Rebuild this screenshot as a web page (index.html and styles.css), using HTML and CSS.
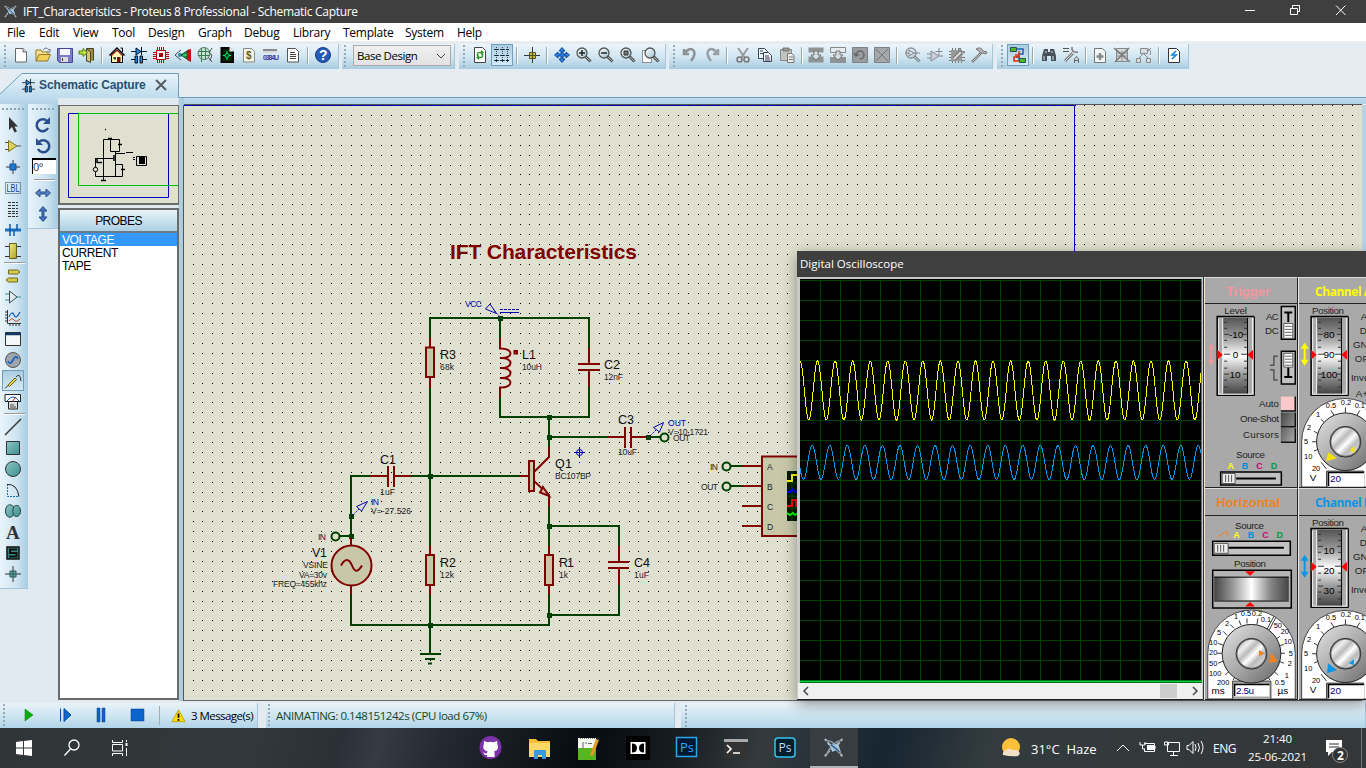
FILE: index.html
```html
<!DOCTYPE html>
<html lang="en">
<head>
<meta charset="utf-8">
<title>IFT_Characteristics - Proteus 8 Professional - Schematic Capture</title>
<link rel="stylesheet" href="styles.css">
</head>
<body>
<svg class="defs" width="0" height="0">
<defs>
<linearGradient id="steelV" x2="0" y2="1"><stop offset="0" stop-color="#555"/><stop offset=".25" stop-color="#999"/><stop offset=".5" stop-color="#fff"/><stop offset=".75" stop-color="#999"/><stop offset="1" stop-color="#444"/></linearGradient>
<linearGradient id="steelH"><stop offset="0" stop-color="#444"/><stop offset=".25" stop-color="#999"/><stop offset=".5" stop-color="#fff"/><stop offset=".75" stop-color="#888"/><stop offset="1" stop-color="#444"/></linearGradient>
<linearGradient id="ring" x2="1" y2="1"><stop offset="0" stop-color="#e4e4e4"/><stop offset=".5" stop-color="#aaa"/><stop offset="1" stop-color="#666"/></linearGradient>
<linearGradient id="key" x2="1" y2="1"><stop offset="0" stop-color="#444"/><stop offset=".5" stop-color="#777"/><stop offset="1" stop-color="#aaa"/></linearGradient>
<linearGradient id="cap" x1="0" y1="0" x2="1" y2="1"><stop offset="0" stop-color="#999"/><stop offset=".25" stop-color="#eee"/><stop offset=".4" stop-color="#bbb"/><stop offset=".55" stop-color="#fff"/><stop offset=".7" stop-color="#bbb"/><stop offset="1" stop-color="#eee"/></linearGradient>
<linearGradient id="teal" x2="1" y2="1"><stop offset="0" stop-color="#8cc6c6"/><stop offset="1" stop-color="#3e8f90"/></linearGradient>
<linearGradient id="gold" x2="1" y2="1"><stop offset="0" stop-color="#f2ef83"/><stop offset="1" stop-color="#aaa028"/></linearGradient>
<linearGradient id="lens" x2="1" y2="1"><stop offset="0" stop-color="#fff"/><stop offset="1" stop-color="#9dc3d6"/></linearGradient>
<g id="dialFrame"><path d="M1217 396V316.500H1254" fill="none" stroke="#000" stroke-width="1.500"/><path d="M1216.500 396H1254.500V316.500" fill="none" stroke="#000"/><path d="M1218.500 395V318.500M1252.500 318V394.500H1219" fill="none" stroke="#eee"/><rect x="1222.500" y="318" width="25" height="76" fill="url(#steelV)"/><path d="M1222.500 318V394" stroke="#f2f2f2"/><path d="M1247.500 318V394" stroke="#000"/><path class="ticks" d="M1224 322.500h3M1224 328.500h3M1224 334.500h5M1224 340.500h3M1224 347.500h3M1224 354.500h6M1224 361.500h3M1224 368.500h3M1224 374.500h5M1224 380.500h3M1224 387.500h3M1244 322.500h3M1244 328.500h3M1243 334.500h4M1244 340.500h3M1244 347.500h3M1241 354.500h6M1244 361.500h3M1244 368.500h3M1243 374.500h4M1244 380.500h3M1244 387.500h3"/><path d="M1217 350l5.500 5-5.500 5zM1253 350l-5.500 5 5.500 5z" fill="#f00"/></g>
<g id="vdial"><path d="M1301.500 488V442.500A43.500 43.500 0 0 1 1388.500 442.500V488H1364V472H1326.500V488z" fill="#fff" stroke="#444"/><path d="M1326.500 470L1321 463M1314 452l6-3M1312 442.500h6M1314 432l5 3M1321 420l4 4M1331 411l3 5M1345.500 408v6M1360 411l-3 5M1366 410l5-9" stroke="#333" fill="none"/><circle cx="1345.500" cy="442.500" r="29" fill="url(#ring)" stroke="#222"/><circle cx="1345.500" cy="442.500" r="15.500" fill="#777" stroke="#333"/><circle cx="1345.500" cy="442.500" r="14" fill="url(#cap)"/><g class="knobtext"><text x="1331" y="409">0.5</text><text x="1346" y="406">0.2</text><text x="1360" y="409">0.1</text><text x="1318" y="418">1</text><text x="1309" y="431">2</text><text x="1306" y="445">5</text><text x="1308" y="460">10</text><text x="1316" y="472">20</text></g><text class="unit" x="1313" y="482">V</text><rect x="1328.500" y="473.500" width="36" height="14" fill="#fff"/><path d="M1328.500 487V473.500H1364" stroke="#000" fill="none" stroke-width="1.500"/><text class="val" x="1330" y="482.500" textLength="11">20</text></g>
<g id="bird"><path d="M2 2l4 5M14 2l-4 5M2 14l4-5M14 14l-4-5" stroke="#aeb4b8" stroke-width="1.500" stroke-dasharray="2 1" fill="none"/><path d="M3 3q6 0 10 10M13 3q-6 1-10 10" stroke="#8ba0ad" fill="none"/><path d="M4 5l4 1 3-1 1 3 1 3-4-1-2 1-1-3z" fill="#a8c6da"/><path d="M6 6l4 3 2 2" stroke="#2a5d94" fill="none"/></g>
<g id="mag"><path d="M9.500 9.500l5 5" stroke="#555" stroke-width="3"/><path d="M10 10l4 4" stroke="#aaa"/><circle cx="6" cy="6" r="5" fill="url(#lens)" stroke="#555" stroke-width="1.300"/></g>
<g id="schem"><path d="M0 4.500h5M10 4.500h6" stroke="#123"/><path d="M5 1v7l5-3.500z" fill="#1e8ce0" stroke="#012"/><path d="M10.500 0v8M0 12.500h4M12 12.500h4" stroke="#012"/><path d="M4 9h2.500v7H4zM9 9h2.500v7H9z" fill="#1e8ce0" stroke="#012"/></g>
</defs>
</svg>

<header class="titlebar">
<svg class="app" viewBox="0 0 16 16"><use href="#bird"/></svg>
<span class="caption">IFT_Characteristics - Proteus 8 Professional - Schematic Capture</span>
<svg class="winbtns" viewBox="1240 0 126 23"><path d="M1245 10.500h10M1290.500 8.500h7v6h-7zM1292.500 8v-2.500h7v6h-2M1336 5.500l9.500 9.500M1345.500 5.500l-9.500 9.500" stroke="#fff" fill="none"/></svg>
</header>
<nav class="menubar"><span>File</span><span>Edit</span><span>View</span><span>Tool</span><span>Design</span><span>Graph</span><span>Debug</span><span>Library</span><span>Template</span><span>System</span><span>Help</span></nav>

<div class="toolbar">
<div class="group g1"><i class="grip"></i>
<b><svg viewBox="0 0 16 16"><path d="M2.500 1.500h7.500l3.500 3.500v10h-11z" fill="#fff" stroke="#666"/><path d="M10 1.500v3.500h3.500" fill="#ddd" stroke="#666"/></svg></b>
<b><svg viewBox="0 0 16 16"><path d="M1 14V3h5l1 2h6v3" fill="#fbe68b" stroke="#94762a"/><path d="M1 14L4 7.500h11.500L12.500 14z" fill="#f3cf58" stroke="#94762a"/><path d="M8 3q3-4 6 0l1-1v3h-3" fill="none" stroke="#777"/></svg></b>
<b><svg viewBox="0 0 16 16"><path d="M.500 1.500h15v14h-13l-2-2z" fill="#7d7bc8" stroke="#484690"/><rect x="3" y="2" width="10" height="6" fill="#f6f6ff"/><rect x="4" y="10" width="7" height="5" fill="#ddd"/><path d="M5.500 11v3" stroke="#444"/></svg></b>
<b><svg viewBox="0 0 16 16"><path d="M7.500 14.500V1.500h7v12" fill="#a38a41" stroke="#443"/><path d="M7.500 2l4 3v10.500l-4-2z" fill="#d9c477" stroke="#443"/><path d="M0 4h4V1.500l4.500 4-4.500 4V7H0z" fill="#bde23b" stroke="#567812"/></svg></b>
<em></em>
<b><svg viewBox="0 0 16 16"><path d="M2.500 8v7.500h11V8L8 3z" fill="#fff8b4" stroke="#000"/><path d="M.500 8.500L8 1l7.500 7.500" fill="none" stroke="#000" stroke-width="1.500"/><path d="M2.500 9L8 3.500 13.500 9" fill="none" stroke="#e01010"/><path d="M11.500 1h2v4" stroke="#000" fill="none"/><rect x="8" y="10" width="3.500" height="5.500" fill="#711"/><rect x="4.500" y="10" width="2.500" height="2.500" fill="#345"/></svg></b>
<b><svg viewBox="0 0 16 16"><use href="#schem"/></svg></b>
<b><svg viewBox="0 0 16 16"><path d="M4.500 0v16M6.500 0v16M8.500 0v16M10.500 0v16M0 5.500h16M0 7.500h16M0 9.500h16M0 11.500h16" stroke="#c00010"/><rect x="3.500" y="3.500" width="9" height="9" fill="#fff" stroke="#c00010"/><rect x="6" y="6" width="4" height="4" fill="#900"/></svg></b>
<b><svg viewBox="0 0 16 16"><path d="M0 8l6-5M0 8l6 5" stroke="#345" fill="none"/><circle cx="5" cy="8" r="2" fill="#2b86a0"/><path d="M6 8l6-4v8z" fill="#18a038" stroke="#143"/><path d="M12 3l4-1v13l-4-2z" fill="#c01010"/><path d="M8 8h4" stroke="#4e8"/></svg></b>
<b><svg viewBox="0 0 16 16"><circle cx="7" cy="6.500" r="6" fill="#c9dfcf" stroke="#55806a"/><path d="M1 4.500h12M1 8.500h12M4.500 1v14M8.500 1v12" stroke="#397b4e"/><path d="M11 10l4 5M15 1l-3 5 3 2-2 6" stroke="#555" fill="none"/></svg></b>
<b><svg viewBox="0 0 16 16"><path d="M2.500 1h7.500l4 4v10H2.500z" fill="#020" stroke="#000" stroke-width="2"/><path d="M8 4v9M4 8.500h8" stroke="#0f7"/><circle cx="8" cy="8.500" r="2" fill="#031" stroke="#0d7"/><path d="M10.500 0v4.500H15z" fill="#eee"/></svg></b>
<b><svg viewBox="0 0 16 16"><path d="M2.500 1.500h8l3 3v10.500h-11z" fill="#f5f5e4" stroke="#888"/><text x="5" y="12" class="dollar">$</text></svg></b>
<b><svg viewBox="0 0 16 16"><path d="M0 3h14" stroke="#888" stroke-width="2"/><path d="M0 5h15" stroke="#ccc"/><text x="0" y="13" class="obom" textLength="16">0384U</text></svg></b>
<b><svg viewBox="0 0 16 16"><path d="M2.500 1.500h8l3 3v10.500h-11z" fill="#fff" stroke="#555"/><path d="M5 5.500h5M5 7.500h6M5 9.500h6M5 11.500h6" stroke="#444"/></svg></b>
<em></em>
<b><svg viewBox="0 0 16 16"><circle cx="8" cy="8" r="7.500" fill="#245ab9" stroke="#173a86"/><text x="4" y="13" class="help">?</text></svg></b>
</div>
<div class="group g2"><i class="grip"></i><div class="combo"><span>Base Design</span><svg viewBox="0 0 10 6"><path d="M1 1l4 4 4-4" stroke="#444" fill="none"/></svg></div></div>
<div class="group g3"><i class="grip"></i>
<b><svg viewBox="0 0 16 16"><path d="M2.500.500h8l3 3V15.500h-11z" fill="#fff" stroke="#444"/><path d="M5.500 9V7q0-2 4-1.500M10.500 7v2q0 2-4 1.500" fill="none" stroke="#239b23" stroke-width="1.500"/><path d="M9 3l3 2.500L9 8zM7 8l-3 2.500L7 13z" fill="#239b23"/></svg></b>
<b class="on"><svg viewBox="0 0 16 16"><path d="M2.500 0v16M8.500 0v16M13.500 0v16M0 2.500h16M0 8.500h16M0 13.500h16" stroke="#345" stroke-dasharray="1 1"/><path d="M1 2.500h3M7 2.500h3M12 2.500h3M1 8.500h3M7 8.500h3M12 8.500h3M1 13.500h3M7 13.500h3M12 13.500h3" stroke="#123"/></svg></b>
<em></em>
<b><svg viewBox="0 0 16 16"><path d="M8.500 0v16M0 8.500h16" stroke="#333"/><path d="M5.500 5.500h6v6h-6z" fill="#c6bd35" stroke="#555224"/><path d="M8.500 5v6M5 8.500h6" stroke="#555224"/></svg></b>
<em></em>
<b><svg viewBox="0 0 16 16"><path d="M8 .500l3 3.500H9v3h3V5l3.500 3-3.500 3V9H9v3h2l-3 3.500L5 12h2V9H4v2L.500 8 4 5v2h3V4H5z" fill="#2984e4" stroke="#10479a"/></svg></b>
<b><svg viewBox="0 0 16 16"><use href="#mag"/><path d="M3 6h6M6 3v6" stroke="#222" stroke-width="1.500"/></svg></b>
<b><svg viewBox="0 0 16 16"><use href="#mag"/><path d="M3 6h6" stroke="#222" stroke-width="1.500"/></svg></b>
<b><svg viewBox="0 0 16 16"><use href="#mag"/><path d="M4 4h4v4H4z" fill="#777" stroke="#333"/></svg></b>
<b><svg viewBox="0 0 16 16"><path d="M.500 3.500h9v12h-9z" fill="#fff" stroke="#333" stroke-dasharray="1 1"/><g transform="translate(2)"><use href="#mag"/></g></svg></b>
</div>
<div class="group g4"><i class="grip"></i>
<b><svg viewBox="0 0 16 16"><path d="M2 2v5h5M2 7q5-7 9-4t-2 11" fill="none" stroke="#8d9297" stroke-width="2.500"/></svg></b>
<b><svg viewBox="0 0 16 16"><path d="M14 2v5H9M14 7q-5-7-9-4t2 11" fill="none" stroke="#9a9fa3" stroke-width="2.500"/></svg></b>
<em class="wide"></em>
<b><svg viewBox="0 0 16 16"><path d="M3 1l7 10M13 1L6 11" stroke="#999" stroke-width="2" fill="none"/><circle cx="4.500" cy="12.500" r="2.500" fill="none" stroke="#777" stroke-width="1.500"/><circle cx="11.500" cy="12.500" r="2.500" fill="none" stroke="#777" stroke-width="1.500"/></svg></b>
<b><svg viewBox="0 0 16 16"><path d="M1.500 1.500h6l3 3v7h-9z" fill="#eef3ff" stroke="#3c4352"/><path d="M6.500 5.500h5l3 3v6h-8z" fill="#eef3ff" stroke="#3c4352"/><path d="M3 4h3M3 6.500h3M8 9h4M8 11h5M8 13h5" stroke="#3c4352"/></svg></b>
<b><svg viewBox="0 0 16 16"><path d="M1.500 2.500h11v11h-11z" fill="#c4c4bf" stroke="#888"/><path d="M4 1h6v3H4z" fill="#999" stroke="#777"/><path d="M8.500 6.500h4l2.500 2v7H8.500z" fill="#eee" stroke="#777"/><path d="M10 10h4M10 12.500h4" stroke="#777"/></svg></b>
<em class="slim"></em>
<b><svg viewBox="0 0 16 16"><path d="M.500.500h15v5h-5v4h5v6H.500v-6h5v-4h-5z" fill="#8e9396"/><path d="M6 4h4v4h3l-5 5-5-5h3z" fill="#d4dde2" stroke="#777"/></svg></b>
<b><svg viewBox="0 0 16 16"><path d="M.500.500h15v5H.500z" fill="#e5edf0" stroke="#888"/><path d="M0 10h16v6H0z" fill="#8e9396"/><path d="M6 4h4v4h3l-5 5-5-5h3z" fill="#d4dde2" stroke="#777"/></svg></b>
<b><svg viewBox="0 0 16 16"><path d="M.500.500h15v15H.500z" fill="#999da0" stroke="#7d8184"/><path d="M4 8a4 4 0 1 1 4 4M2 6l2 3 3-2" fill="none" stroke="#62666a" stroke-width="1.500"/></svg></b>
<b><svg viewBox="0 0 16 16"><path d="M.500.500h15v15H.500z" fill="#a4a8ab" stroke="#7d8184"/><path d="M2 2l12 12M14 2L2 14" stroke="#70757a"/></svg></b>
<em class="wide"></em>
<b><svg viewBox="0 0 16 16"><g opacity=".6"><use href="#mag"/></g><path d="M4 3v6l5-3zM0 6h4M9 6h6" fill="none" stroke="#888"/></svg></b>
<b><svg viewBox="0 0 16 16"><path d="M4 4v10l8-5zM0 7h4M0 11h4M12 9h4M12 1v7M8.500 4.500h7" fill="#ccd" stroke="#858a8e"/></svg></b>
<b><svg viewBox="0 0 16 16"><path d="M3.500 1v15M6.500 1v15M9.500 1v15M12.500 6v10M0 4.500h12M0 7.500h14M0 10.500h16M0 13.500h16" stroke="#777"/><rect x="2" y="3" width="11" height="11" fill="#999"/><path d="M5 12l7-7" stroke="#777" stroke-width="4"/><path d="M5 12l7-7" stroke="#ddd" stroke-width="2"/><path d="M11 1q0 5 5 4" stroke="#888" stroke-width="2" fill="none"/></svg></b>
<b><svg viewBox="0 0 16 16"><path d="M1 15l9-9" stroke="#777" stroke-width="2.500"/><path d="M1.500 14.500l8-8" stroke="#ccc"/><path d="M5 2q5-3 7 2l4 1-1 2-4-1-1 0z" fill="#b1b5b8" stroke="#777"/></svg></b>
</div>
<div class="group g5"><i class="grip"></i>
<b class="on"><svg viewBox="0 0 16 16"><path d="M7 2h6v5H9M9 14v-4H6" stroke="#1b64bb" stroke-width="1.500" fill="none"/><path d="M9 4v6H4v4h6M5 8h4" stroke="#d3310b" stroke-width="1.500" fill="none"/><path d="M.500 .500h6v4h-6zM9.500 11.500h6v4h-6z" fill="#51b824" stroke="#255"/></svg></b>
<em class="wide"></em>
<b><svg viewBox="0 0 16 16"><path d="M3 2h4v3h2V2h4l2 7v5h-5V9H6v5H1V9z" fill="#46515a"/><path d="M3 9v4M12 9v4M5 4v2M11 4v2" stroke="#dde5ea"/></svg></b>
<b><svg viewBox="0 0 16 16"><path d="M0 1.500h6M0 4.500h6" stroke="#555"/><path d="M2 14l8-8" stroke="#777" stroke-width="3"/><path d="M2 14l8-8" stroke="#ddd"/><path d="M9 0q-1 6 6 5" stroke="#777" fill="none" stroke-width="1.500"/><path d="M11.500 16v-4l2-2.500 2 2.500v4M12 13.500h3" fill="none" stroke="#666"/></svg></b>
<em class="slim"></em>
<b><svg viewBox="0 0 16 16"><path d="M2.500 1.500h8l3 3v11h-11z" fill="#f3f4f4" stroke="#777"/><path d="M8 6v7M4.500 9.500h7" stroke="#888" stroke-width="2.500"/></svg></b>
<b><svg viewBox="0 0 16 16"><path d="M2.500 1.500h11v13h-11z" fill="#d3d7da" stroke="#888"/><path d="M3 6h10M3 9h10M8 4v10" stroke="#888"/><path d="M0 1l16 14M15 1L1 15" stroke="#777" stroke-width="1.500"/></svg></b>
<b><svg viewBox="0 0 16 16"><path d="M4.500 1.500h7v5h-7zM.500 11.500h4v4h-4zM10.500 11.500h4v4h-4z" fill="#ddd" stroke="#858a8e"/><path d="M7 7L3 11M8 7l4 4M12 2q4 1 2 6M12 4l3-3" fill="none" stroke="#858a8e"/></svg></b>
<em></em>
<b><svg viewBox="0 0 16 16"><path d="M2.500 1.500h8l3 3v11h-11z" fill="#fff" stroke="#333"/><path d="M10 4L6 8h4l-4 4" stroke="#1686d8" stroke-width="1.700" fill="none"/></svg></b>
</div>
</div>

<div class="tabs"><svg class="tabshape" viewBox="0 0 1366 29"><path d="M0 28.500V25L22 4.500H178.500V28.500H1366V29H0z" fill="url(#tabfill)"/><defs><linearGradient id="tabfill" x2="0" y2="1"><stop offset="0" stop-color="#e9f4fb"/><stop offset="1" stop-color="#bddbec"/></linearGradient></defs><path d="M0 25L22 4.500H178.500V28.500H1366" stroke="#6b9fbd" fill="none"/></svg>
<div class="tab"><svg viewBox="0 0 16 16"><use href="#schem"/></svg><span>Schematic Capture</span><svg class="x" viewBox="0 0 12 12"><path d="M1 1l10 10M11 1L1 11" stroke="#555c62" stroke-width="2"/></svg></div></div>

<main class="work">
<aside class="modes"><i class="hgrip"></i>
<b><svg viewBox="0 0 16 16"><path d="M4 0v13l3-3 2.500 5.500 2.500-1L9.500 9.500H13z" fill="#333"/></svg></b>
<b><svg viewBox="0 0 16 16"><path d="M0 4.500h3M0 11.500h3M12 8h4" stroke="#555"/><path d="M3.500 2.500v11L12 8z" fill="#dcd25c" stroke="#7b7322"/></svg></b>
<b><svg viewBox="0 0 16 16"><path d="M8 1v14M1 8h14" stroke="#333"/><path d="M5 5h6v6H5z" fill="#1f7bd2" stroke="#0b4f94"/></svg></b>
<b><svg viewBox="0 0 16 16"><path d="M.500 2.500h15v11H.500z" fill="none" stroke="#345" stroke-dasharray="1 1"/><text x="1.500" y="11.500" class="lbl" textLength="13" lengthAdjust="spacingAndGlyphs">LBL</text></svg></b>
<b><svg viewBox="0 0 16 16"><path d="M3 1.500h10M3 4.500h10M3 7.500h10M3 10.500h10M3 12.500h10M3 15.500h10" stroke="#333" stroke-dasharray="3 1"/></svg></b>
<b><svg viewBox="0 0 16 16"><path d="M0 8h16" stroke="#1772c8" stroke-width="3"/><path d="M5 2v6M12 2v6M5 8v6M9 8v6" stroke="#1558a0" stroke-width="1.500"/></svg></b>
<b><svg viewBox="0 0 16 16"><path d="M0 3.500h4M0 13.500h4M12 3.500h4M12 13.500h4" stroke="#333"/><path d="M4.500.500h7v15h-7z" fill="url(#gold)" stroke="#665f1c"/></svg></b>
<em></em>
<b><svg viewBox="0 0 16 16"><path d="M3.500 2h9l2.500 2-2.500 2h-9zM12.500 10h-9L1 12l2.500 2h9z" fill="#d6cb4f" stroke="#6e671f"/></svg></b>
<b><svg viewBox="0 0 16 16"><path d="M0 5h4M0 11h4M12 8h4" stroke="#2a9a9a"/><path d="M4.500 2v12l7.500-6z" fill="#dfeef5" stroke="#444"/></svg></b>
<b><svg viewBox="0 0 16 16"><path d="M2.500 0v13.500H16" stroke="#333" fill="none"/><path d="M0 2h2M0 5h2M0 8h2M0 11h2M5 14v2M8 14v2M11 14v2M14 14v2" stroke="#333"/><path d="M4 7q3-7 5-2t6-3" stroke="#1d5fb5" fill="none" stroke-width="1.300"/><path d="M4 11q3-4 5-1t6-1" stroke="#c3421a" fill="none"/></svg></b>
<b><svg viewBox="0 0 16 16"><path d="M.500 1.500h15v13H.500z" fill="#f4f6f8" stroke="#333"/><path d="M0 3h16" stroke="#123a66" stroke-width="2.500"/></svg></b>
<b><svg viewBox="0 0 16 16"><circle cx="8" cy="8" r="7.500" fill="#9fa5aa" stroke="#555"/><path d="M3 9q2 5 5-1t5-1" stroke="#1660c0" fill="none" stroke-width="1.700"/></svg></b>
<b class="on"><svg viewBox="0 0 16 16"><path d="M0 15.500l4-4M11 4q4-5 5 4" stroke="#333" fill="none"/><path d="M3 12l7-7 1.500 1.500-7 7z" fill="#f0dc48" stroke="#665f1c"/></svg></b>
<b><svg viewBox="0 0 16 16"><path d="M0 7V.500h15.500V7" fill="#fff" stroke="#222"/><path d="M2 7q6-8 12 0" fill="none" stroke="#1660c0"/><path d="M7 8l4-5" stroke="#d02010"/><path d="M0 7.500h16M3.500 8v7h9V8" fill="#ddd" stroke="#222"/><path d="M5 11h4M5 13h6" stroke="#444"/></svg></b>
<em></em>
<b><svg viewBox="0 0 16 16"><path d="M0 16L16 0" stroke="#333" stroke-width="1.500"/></svg></b>
<b><svg viewBox="0 0 16 16"><path d="M1.500 1.500h13v13h-13z" fill="url(#teal)" stroke="#333"/></svg></b>
<b><svg viewBox="0 0 16 16"><circle cx="8" cy="8" r="7.500" fill="url(#teal)" stroke="#333"/></svg></b>
<b><svg viewBox="0 0 16 16"><path d="M2.500 2v12.500H14" fill="none" stroke="#1772c8" stroke-dasharray="2 1"/><path d="M2 2.500q10-1 12 12" fill="none" stroke="#222"/></svg></b>
<b><svg viewBox="0 0 16 16"><path d="M8.500 4C6 0 .5 1.500.5 8s5.500 8 8 4c2.500 3 7 1.500 7-4s-4.500-7-7-4" fill="url(#teal)" stroke="#244"/><path d="M8.500 4q-1.500 4 0 8" fill="none" stroke="#244"/></svg></b>
<b><svg viewBox="0 0 16 16"><text x="1" y="14.500" class="bigA" textLength="14">A</text></svg></b>
<b><svg viewBox="0 0 16 16"><path d="M2 2h12v12H2z" fill="#34847f" stroke="#111" stroke-width="1.500"/><path d="M12 4.500H5v3.500h6.500v3.500H4" stroke="#111" stroke-width="2" fill="none"/></svg></b>
<b><svg viewBox="0 0 16 16"><path d="M8 0v16M0 8h16" stroke="#333"/><path d="M5 5h6v6H5z" fill="#63aaa6" stroke="#285854"/><path d="M8 5v6M5 8h6" stroke="#285854"/></svg></b>
</aside>
<aside class="orient"><i class="hgrip"></i>
<b><svg viewBox="0 0 16 16"><path d="M13 11a6 6 0 1 1-1-7" stroke="#2a4e8c" stroke-width="2.500" fill="none"/><path d="M15 0v7H8z" fill="#2a4e8c"/></svg></b>
<b><svg viewBox="0 0 16 16"><path d="M3 11a6 6 0 1 0 1-7" stroke="#2a4e8c" stroke-width="2.500" fill="none"/><path d="M1 0v7h7z" fill="#2a4e8c"/></svg></b>
<div class="angle">0°</div><em></em>
<b><svg viewBox="0 0 16 16"><path d="M.500 8l4.500-4v3h6V4l4.500 4-4.500 4V9H5v3z" fill="#5580c8" stroke="#2a4e8c"/></svg></b>
<b><svg viewBox="0 0 16 16"><path d="M8 .500l4 4.500H9v6h3l-4 4.500L4 11h3V5H4z" fill="#4470bb" stroke="#2a4e8c"/></svg></b>
</aside>
<aside class="side">
<div class="overview"><svg viewBox="60 105 118 98"><path d="M68.500 112.500h100v84h-100z" fill="none" stroke="#0000c0"/><path d="M180 112.500H78.500v72H180" fill="none" stroke="#00c000"/><path d="M103.500 180V138.500h16v12h-9v-12M95.500 157.500h18M95.500 157v18.500h27V163.500h-7M115.500 151v24M115 152.500h7M122 152.500h3M126 151.500h7" fill="none" stroke="#000"/><path d="M101 179.500h5M114 154v6M118 143.500h4M121 168.500h4M105 128.500h1M97 158v4M97 161.500h5M108 137.500h4" stroke="#000" fill="none" stroke-width="1.500"/><circle cx="95.500" cy="168.500" r="2.200" fill="#e0e0d0" stroke="#000"/><path d="M136.500 155.500h10v9h-10z" fill="#e0e0d0" stroke="#000"/><path d="M139 156h6v7h-6zM133 156h2v1h-2zM133 158h2v1h-2z"/></svg></div>
<div class="probes"><div class="ptitle">PROBES</div><ul><li class="sel">VOLTAGE</li><li>CURRENT</li><li>TAPE</li></ul></div>
</aside>
<section class="sheet">
<svg id="sheet" viewBox="184 105 1178 595">
<path d="M184 105.500H1074.500V700" fill="none" stroke="#0000c0"/>
<path id="dots" stroke="#000" fill="none" shape-rendering="crispEdges"/>
<g class="wire"><path d="M430 338V318H589V348M500 318V338M500 397V417H589V387M430 388V546M430 595V653M549 417V447M549 437H608M645 437H660M411 476H520M370 476H351V536H340M549 507V546M549 526H619V546M619 585V615H549M549 595V625H351V595M730 466H742M730 486H742"/><path d="M420 654H441M425 659H435M428 663.500H432"/><circle cx="335.500" cy="536.500" r="4"/><circle cx="664.500" cy="437.500" r="4"/><circle cx="726.500" cy="466.500" r="4"/><circle cx="726.500" cy="486.500" r="4"/></g>
<g class="node"><path d="M498 316h5v5h-5zM547 415h5v5h-5zM547 435h5v5h-5zM428 474h5v5h-5zM349 514h5v5h-5zM349 534h5v5h-5zM547 524h5v5h-5zM547 613h5v5h-5zM428 623h5v5h-5zM646 435h5v5h-5z"/></g>
<g class="part"><path d="M430 338V388M430 546V595M549 546V595M500 338V348.500C514 348 514 359 500 358C514 357 514 369 500 368C514 367 514 379 500 378C514 377 514 388 500 387.500V397M589 348V364M578 364H600M578 370H600M589 370V387M608 437H624M625 427V448M631 427V448M631 437H646M370 476H387M388 466V487M394 466V487M394 476H411M351 538V545M351 585V595M619 546V562M608 562H629M608 568H629M619 568V585M520 476H528M534 472L549 457V447M534 481L549 495V507M742 466H762M742 486H762M742 506H762M742 526H762"/><path class="filled" d="M426 347.500h8v29.500h-8zM426 555h8v30h-8zM545 555h8v30h-8zM529 461h5v30h-5zM543 487L549 496L540 492.500zM798 456.500H762V536H798"/><path d="M514.500 351h2.500v2.500h-2.500z"/><circle class="filled" cx="351.500" cy="565.500" r="20"/><path d="M341 565.500C345 558 349 558 352 565.500S358 572 362 565.500"/></g>
<path d="M787 471h11v50h-11z" fill="#031803"/><path d="M787 483h11M787 496h11M787 508h11M792 471v50" stroke="#0a4a0a"/><path d="M787 481h5v-6h6" fill="none" stroke="#ff0" stroke-width="2"/><path d="M787 492h3l2-3 3 3h3" fill="none" stroke="#00f" stroke-width="2"/><path d="M787 506h5v-6h4v6h2" fill="none" stroke="#f00" stroke-width="2"/><path d="M787 513l3 2 3-2 2 2 3-2" fill="none" stroke="#0f0" stroke-width="2"/>
<g class="probe"><path d="M490 304L485.500 309L496.500 313.500zM663.500 422.500L653.500 427.500L659.500 432zM367.500 501.500L356.500 506.500L361.500 511zM500 312.500H519"/><path stroke-dasharray="3 1" d="M500 309.500H519"/><path stroke-dasharray="1.500 1" d="M493 309l7 8M656 430l-7 7M359 509l-8 8"/><path d="M574 452.500h11M579.500 447v11"/><circle cx="579.500" cy="452.500" r="3"/></g>
<text class="big" x="450" y="259" textLength="187">IFT Characteristics</text>
<g class="ref"><text x="440" y="359" textLength="16">R3</text><text x="522" y="359" textLength="14">L1</text><text x="604" y="369" textLength="16">C2</text><text x="618" y="424" textLength="16">C3</text><text x="380" y="464" textLength="16">C1</text><text x="555" y="468" textLength="17">Q1</text><text x="312" y="557" textLength="15">V1</text><text x="440" y="567" textLength="16">R2</text><text x="559" y="567" textLength="15">R1</text><text x="634" y="567" textLength="16">C4</text></g>
<g class="pv"><text x="440" y="370" textLength="14">68k</text><text x="522" y="370" textLength="20">10uH</text><text x="604" y="380" textLength="19">12nF</text><text x="618" y="455" textLength="19">10uF</text><text x="380" y="495" textLength="15">1uF</text><text x="555" y="479" textLength="36">BC107BP</text><text x="303" y="568" textLength="25">VSINE</text><text x="299" y="578" textLength="28">VA=30v</text><text x="273" y="587" textLength="54">FREQ=455khz</text><text x="440" y="578" textLength="14">12k</text><text x="559" y="578" textLength="9">1k</text><text x="634" y="578" textLength="15">1uF</text><text x="371" y="514" textLength="40">V=-27.526</text><text x="668" y="435" textLength="40">V=10.1721</text><text x="673" y="441" textLength="17">OUT</text><text x="318" y="540" textLength="8">IN</text><text x="710" y="470" textLength="8">IN</text><text x="701" y="490" textLength="17">OUT</text><text x="767" y="470">A</text><text x="767" y="490">B</text><text x="767" y="510">C</text><text x="767" y="530">D</text></g>
<g class="pl"><text x="465" y="307" textLength="17">VCC</text><text x="668" y="426" textLength="18">OUT</text><text x="371" y="505" textLength="8">IN</text></g>
</svg>
</section>
</main>

<footer class="status">
<div class="s1"><i class="grip"></i><svg viewBox="0 703 170 25"><path d="M25 709l8 6-8 6z" fill="#08ad08" stroke="#087008" stroke-width=".5"/><path d="M60.500 708.500v13M64 708.500l7 6.500-7 6.500z" fill="#1268c8" stroke="#0a4fa3"/><path d="M97 708h3v14h-3zM102 708h3v14h-3zM131 709h13v12h-13z" fill="#0b63cd" stroke="#0a4189" stroke-width=".5"/><path d="M159.500 706v19" stroke="#aaa"/></svg><svg class="warn" viewBox="0 0 16 16"><path d="M8 1l7.500 13.500H.500z" fill="#fd0" stroke="#c59b00"/><path d="M8 5v5M8 11.500v2" stroke="#000" stroke-width="2"/></svg><span>3 Message(s)</span></div>
<div class="s2"><i class="grip"></i><span>ANIMATING: 0.148151242s (CPU load 67%)</span></div>
<div class="s3"><i class="grip"></i></div>
</footer>

<footer class="taskbar">
<svg viewBox="0 728 160 40"><path d="M16 742l7-1v6.500h-7zM24 741l8-1v7.500h-8zM16 748.500h7v6.500l-7-1zM24 748.500h8v7.500l-8-1z" fill="#fff"/><circle cx="74" cy="745" r="5" fill="none" stroke="#fff" stroke-width="1.300"/><path d="M70.500 749l-6 6.500" stroke="#fff" stroke-width="1.300"/><path d="M112.500 740v2.500h10V740M112.500 756v-2.500h10V756M112.500 744.500h10v6.500h-10zM126.500 740v2M126.500 748v8" fill="none" stroke="#fff"/><path d="M125.500 743h2v3h-2z" fill="#fff"/></svg>
<svg class="apps" viewBox="470 728 390 40">
<ellipse cx="490.500" cy="747.500" rx="11" ry="11.500" fill="#7c32a8"/><path d="M484 741l3.500 1.200q3-.7 6 0L497 741l.3 3q2.500 6-3.300 7.500.7 1 .6 2v3.500h-7.500v-2q-3 .6-4-3 2.500 2.500 4 .8l.5-1.300q-6-1.500-3.700-7.500z" fill="#fff"/>
<path d="M529 739h7l2 2h12v16h-21z" fill="#f6bd37"/><path d="M529 743h21v14h-21z" fill="#ffd968"/><path d="M534 759v-9h12v9h-4v-4h-4v4z" fill="#3a9ae0"/>
<path d="M578 738h18v22h-18z" fill="#f5f7ef"/><path d="M578 748h18v12h-18z" fill="#57b61b"/><path d="M580 738.500h15" stroke="#777" stroke-dasharray="1 1"/><path d="M583 742v7M585 743h2M588 743.500h4" stroke="#667"/><path d="M590 755l6-16 3 1-6 16z" fill="#dd9b28"/>
<path d="M626 736h24v24h-24z" fill="#000"/><path d="M630.500 742h15v12h-15z" fill="#fff"/><path d="M632 743.500q5 0 5 4.500t-5 4.500zM644 743.500q-5 0-5 4.500t5 4.500z" fill="#000"/>
<rect x="676.500" y="737.500" width="20" height="19" fill="#001833" stroke="#2ba6e9" stroke-width="1.500"/><text x="680" y="752" class="ps" fill="#31a8ff" textLength="14" lengthAdjust="spacingAndGlyphs">Ps</text>
<path d="M724 739h24v19h-24z" fill="#333"/><path d="M724 739h24v3h-24z" fill="#aaa"/><path d="M727 745l4 4-4 4M733 753h7" fill="none" stroke="#fff" stroke-width="1.700"/>
<rect x="775" y="738" width="20" height="19" rx="3" fill="#001e2b" stroke="#31c5f0" stroke-width="1.500"/><text x="778.500" y="752" class="ps" fill="#bdf" textLength="13" lengthAdjust="spacingAndGlyphs">Ps</text>
<path d="M810 728h48v40h-48z" fill="#373d41"/><path d="M810 766h48v2h-48z" fill="#aeb4b7"/><g transform="translate(822 736) scale(1.450)"><use href="#bird"/></g>
</svg>
<div class="tray"><svg class="sun" viewBox="0 0 20 20"><circle cx="10" cy="9" r="9" fill="#ffc13b"/><path d="M2 17a4 4 0 0 1 3-5q3-3 6 0h5q5 3 1 6-6 1-15-1z" fill="#f2dfc8"/></svg><span class="temp">31°C&nbsp; Haze</span>
<svg class="sys" viewBox="1114 728 94 40"><path d="M1117 751l6-6 6 6M1144.500 743.500h10v8h-10v-3M1140 742v3h5v-3M1142.500 745v4h2M1155 746v3M1167.500 742.500h12v9h-12zM1173.500 752v3M1170 755.500h8M1164.500 742h4v3h-4zM1187 745.500h2l4-4v12l-4-4h-2zM1195 744q2 3.500 0 7M1198 743q3 5 0 9M1201 741q4 6.500 0 13" stroke="#fff" fill="none"/><path d="M1147 745h7v5h-7z" fill="#fff"/></svg>
<span class="eng">ENG</span><div class="clock"><span>21:40</span><span>25-06-2021</span></div>
<svg class="note" viewBox="1316 728 50 40"><path d="M1326 740h16v12h-10l-4 4v-4h-2z" fill="#fff"/><path d="M1329 744h10M1329 747h10" stroke="#333"/><circle cx="1340" cy="755" r="7.500" fill="#333" stroke="#888"/><text x="1337" y="759.500" fill="#fff" class="cnt">2</text><path d="M1361.500 728v40" stroke="#777"/></svg></div>
</footer>

<section class="scope">
<div class="stitle">Digital Oscilloscope</div>
<div class="sbody">
<div class="screen"><svg viewBox="800 279 402 404"><path d="M800 279h402v404H800z"/><path id="grid" stroke="#004000" fill="none"/><path d="M1201.500 279V681.500" stroke="#0a3" fill="none"/><path d="M800 681.500H1202" stroke="#00d838" stroke-width="2"/><path id="waveA" stroke="#ffff00" fill="none" shape-rendering="crispEdges"/><path id="waveB" stroke="#0a95e8" fill="none" shape-rendering="crispEdges"/></svg>
<div class="scroll"><svg viewBox="0 0 6 10"><path d="M5 1L1 5l4 4" fill="none" stroke="#444" stroke-width="1.500"/></svg><i></i><svg viewBox="0 0 6 10"><path d="M1 1l4 4-4 4" fill="none" stroke="#444" stroke-width="1.500"/></svg></div></div>
<div class="panels">
<div class="ph" style="color:#f4969c">Trigger</div><div class="ph cut" style="color:#ffff00">Channel A</div>
<svg class="pb" viewBox="1205 304 92 184"><g class="lab"><text x="1224" y="314" textLength="23">Level</text><text x="1266" y="320" textLength="13">AC</text><text x="1265" y="334" textLength="14">DC</text><text x="1259" y="408" textLength="20">Auto</text><text x="1240" y="423" textLength="39">One-Shot</text><text x="1243" y="439" textLength="36">Cursors</text><text x="1236" y="459" textLength="29">Source</text></g><use href="#dialFrame"/><g class="num"><text x="1236" y="338">-10</text><text x="1235.500" y="358">0</text><text x="1235" y="378">10</text></g>
<path d="M1211 343l3 6h-2v11h2l-3 6-3-6h2v-11h-2z" fill="#f0969c"/>
<path d="M1281.500 306.500h14v33h-14zM1281.500 351.500h14v33h-14z" fill="#c2c2c2" stroke="#000" stroke-width="1.500"/><path d="M1288.500 312v10M1284.500 312.500h8M1288.500 367v11M1284.500 377.500h8" stroke="#000" stroke-width="2"/><path d="M1284 323.500h9v15h-9zM1284 353.500h9v14h-9z" fill="#fff" stroke="#555"/><path d="M1285 326.500h7M1285 329.500h7M1285 332.500h7M1285 335.500h7M1285 356.500h7M1285 359.500h7M1285 362.500h7M1285 365.500h7" stroke="#666"/>
<path d="M1270 365.500h4v-9h4M1270 370h4v10.500h4" stroke="#555" fill="none" stroke-width="1.500"/>
<path d="M1281 397h14v14h-14z" fill="#f9c8c8"/><path d="M1281 413h14v14h-14zM1281 428.500h14v14h-14z" fill="url(#key)"/><path d="M1281 411.500h14.500V397M1281 427.500h14.500V413M1281 443h14.500V429" fill="none" stroke="#111" stroke-width="1.500"/>
<g class="abcd"><text x="1230.500" y="470" fill="#ff0">A</text><text x="1245" y="470" fill="#008ee0">B</text><text x="1259.500" y="470" fill="#d00070">C</text><text x="1274" y="470" fill="#009a40">D</text></g><path d="M1220.500 473h61v13h-61z" fill="#c2c2c2" stroke="#000" stroke-width="1.500"/><path d="M1236 479.500h40" stroke="#000" stroke-width="2"/><path d="M1222 474.500h13v10h-13z" fill="#eee" stroke="#555"/><path d="M1225.500 476v7M1228.500 476v7M1231.500 476v7" stroke="#555"/></svg>
<svg class="pb cut" viewBox="1299 304 67 184"><g class="lab"><text x="1312" y="314" textLength="32">Position</text><text x="1361" y="320">AC</text><text x="1360" y="334">DC</text><text x="1353" y="348">GND</text><text x="1355" y="362">OFF</text><text x="1351" y="381">Invert</text><text x="1356" y="398">A+B</text></g><use href="#dialFrame" x="94"/><g class="num"><text x="1329" y="338">80</text><text x="1329" y="358">90</text><text x="1329" y="378">100</text></g><path d="M1304.500 343l4 6h-3v11h3l-4 6-4-6h3v-11h-3z" fill="#ff0"/><use href="#vdial"/><path d="M1328 453l9 6-11 3zM1354 447l1 7-5-3z" fill="#f2e400"/></svg>
<div class="ph" style="color:#ef8220">Horizontal</div><div class="ph cut" style="color:#0b96e4">Channel B</div>
<svg class="pb" viewBox="1205 516 92 184"><g class="lab"><text x="1235" y="529" textLength="29">Source</text><text x="1234" y="567" textLength="32">Position</text></g><path d="M1217 537l10-6v6" stroke="#ef8220" fill="none"/><g class="abcd"><text x="1236.500" y="538" fill="#ff0">A</text><text x="1251" y="538" fill="#008ee0">B</text><text x="1265.500" y="538" fill="#d00070">C</text><text x="1280" y="538" fill="#009a40">D</text></g><path d="M1212.500 541.500h78v14h-78z" fill="#c2c2c2" stroke="#000" stroke-width="1.500"/><path d="M1228 548h56" stroke="#000" stroke-width="2"/><path d="M1214 543.500h14v10h-14z" fill="#eee" stroke="#555"/><path d="M1217.500 545v7M1220.500 545v7M1223.500 545v7" stroke="#555"/>
<path d="M1212.500 570.500h79v38h-79z" fill="#b5b5b5" stroke="#000" stroke-width="1.500"/><path d="M1214 577h75v24h-75z" fill="url(#steelH)"/><path d="M1214 577.500h75M1214 601.500h75" stroke="#000"/><path d="M1245 571.500h10l-5 4.500zM1245 607h10l-5-4.500z" fill="#f00"/>
<path d="M1207.500 700V654.500A43.500 43.500 0 0 1 1295.500 654.500V700H1271V682H1232.500V700z" fill="#fff" stroke="#444"/><path d="M1274 617l-8 15M1276 618l-7 13" stroke="#333"/><path d="M1217 654h5M1218 644l5 2M1223 632l4 4M1230 625l4 4M1239 621l2 5M1247 619v5M1258 619l-1 6M1218 664l5-2M1225 676l5-5M1285 654h-5M1284 645l-5 2M1280 637l-4 3M1284 664l-5-2M1278 676l-5-5M1233 681l4-7M1270 681l-4-7" stroke="#333"/><circle cx="1251.500" cy="654.500" r="29.500" fill="url(#ring)" stroke="#222"/><circle cx="1251.500" cy="654.500" r="15.500" fill="#777" stroke="#333"/><circle cx="1251.500" cy="654.500" r="14" fill="url(#cap)"/>
<g class="knobtext"><text x="1246" y="617">0.5</text><text x="1257" y="617">0.2</text><text x="1266" y="623">0.1</text><text x="1236" y="620">1</text><text x="1227" y="627">2</text><text x="1219" y="636">5</text><text x="1213" y="646">10</text><text x="1213" y="656">20</text><text x="1213" y="667">50</text><text x="1215" y="677">100</text><text x="1223" y="686">200</text><text x="1278" y="629">50</text><text x="1285" y="635">20</text><text x="1288" y="645">10</text><text x="1291" y="657">5</text><text x="1290" y="667">2</text><text x="1287" y="679">1</text><text x="1280" y="686">0.5</text></g><text class="unit" x="1218" y="694.500">ms</text><text class="unit" x="1283" y="694.500">µs</text><path d="M1234.500 685.500h35v12h-35z" fill="#fff"/><path d="M1234.500 697v-11.500h35" stroke="#000" stroke-width="1.500" fill="none"/><text class="val" x="1236" y="694.500" textLength="18">2.5u</text><path d="M1259 651l6 3-6 3zM1271 653l7 9-9 2z" fill="#ef8220"/></svg>
<svg class="pb cut" viewBox="1299 304 67 184"><g class="lab"><text x="1312" y="314" textLength="32">Position</text><text x="1361" y="320">AC</text><text x="1360" y="334">DC</text><text x="1353" y="348">GND</text><text x="1355" y="362">OFF</text><text x="1351" y="381">Invert</text></g><use href="#dialFrame" x="94"/><g class="num"><text x="1329" y="342">10</text><text x="1329" y="362">20</text><text x="1329" y="382">30</text></g><path d="M1304.500 343l4 6h-3v11h3l-4 6-4-6h3v-11h-3z" fill="#0b96e4"/><use href="#vdial"/><path d="M1328 452l9 7-10 3zM1354 448v6l-5-2z" fill="#0b96e4"/></svg>
</div></div></section>
<script src="draw.js"></script>
</body>
</html>
```
FILE: styles.css
```css
*{box-sizing:border-box}
body{margin:0;width:1366px;height:768px;overflow:hidden;position:relative;background:#e4ecf2;font:12px "Open Sans","Noto Sans",sans-serif;color:#000;display:flex;flex-direction:column}
svg{display:block;flex:none}
.defs{position:absolute}
.titlebar{height:23px;background:#3f3f3f;color:#fff;display:flex;align-items:center;padding-left:3px;flex:none}
.app{width:15px;height:17px}
.caption{margin-left:5px;font-size:12px;letter-spacing:-.31px;white-space:nowrap}
.winbtns{width:126px;height:23px;margin-left:auto}
.menubar{height:18px;background:#fff;display:grid;grid-template-columns:32px 34px 39px 36px 50px 46px 49px 50px 62px 52px 40px;padding-left:7px;letter-spacing:-.25px;flex:none;line-height:20px}
.toolbar{height:28px;display:flex;padding-top:2px;border-top:1px solid #eee;flex:none}
.group{display:flex;height:25px;background:linear-gradient(#ecf5fa,#cfe5f1 55%,#a9cbe0);border-right:1px solid #a4c5da;align-items:flex-start;position:relative;flex:none}
.group b,.modes b,.orient b{display:flex;align-items:center;justify-content:center;width:22px;height:21px;flex:none}
.group b{height:22px}
.group b svg,.modes b svg,.orient b svg{width:16px;height:16px;overflow:visible}
.group em{width:8px;height:17px;margin-top:3px;flex:none;background:linear-gradient(#9aa,#9aa) 3px 0/1px 100% no-repeat,linear-gradient(#fff,#fff) 4px 0/1px 100% no-repeat}
.group em.wide{width:9px}
.group em.slim{width:7px}
.group b.on,.modes b.on{border:1px solid #6f9fbb;background:linear-gradient(#abcde0,#d5eaf5)}
.grip{width:3px;height:23px;margin:1px 3px 0 4px;flex:none;background:radial-gradient(circle at 1px 1px,#9aaab5 1px,transparent 1.2px) 0 0/3px 4px}
.g1{width:339px}
.g2{width:113px;margin-left:3px}
.g2 .grip{margin-left:2px;margin-right:6px}
.g3{width:207px;margin-left:4px}
.g4{width:324px;margin-left:3px}
.g5{width:192px;margin-left:4px}
.combo{width:98px;height:21px;margin-top:1px;border:1px solid #a9abad;background:linear-gradient(#f0f0f0,#e2e2e2);display:flex;align-items:center;justify-content:space-between;padding:0 4px 0 3px;letter-spacing:-.45px;font-size:11.500px}
.combo svg{width:10px;height:6px}
.dollar{font:bold 10px "Liberation Sans",sans-serif;fill:#675b20}
.obom{font:bold 7px "Liberation Sans",sans-serif;fill:#3a3a99}
.help{font:bold 14px "Liberation Sans",sans-serif;fill:#fff}
.lbl{font:10px "Liberation Sans",sans-serif;fill:#0b3f87}
.bigA{font:bold 19px "Liberation Serif",serif;fill:#333}
.tabs{height:29px;position:relative;flex:none;background:#e5edf3}
.tabshape{position:absolute;left:0;top:0;width:1366px;height:29px}
.tab{position:relative;display:flex;align-items:center;height:29px;padding:3px 0 0 22px;color:#294f70;font:bold 12px "Liberation Sans",sans-serif}
.tab svg{width:13px;height:15px}
.tab span{margin-left:4px;letter-spacing:-.12px}
.tab svg.x{width:12px;height:12px;margin-left:9px}
.work{height:603px;display:flex;background:linear-gradient(#bddbed 0,#b2d3e6 6px,#e1eaf0 6px);flex:none}
.modes,.orient{width:28px;background:linear-gradient(90deg,#e9f4fa,#cde4f1 60%,#a7cce1);margin-top:6px;border-bottom:1px solid #a8c5d8;padding-left:2px;flex:none}
.modes{height:485px}
.modes em,.orient em{display:block;height:4px;width:23px;background:linear-gradient(#999,#999) 2px 1px/21px 1px no-repeat,linear-gradient(#fff,#fff) 2px 2px/21px 1px no-repeat}
.hgrip{display:block;width:24px;height:3px;margin:4px 0 3px;background:radial-gradient(circle at 1px 1px,#8fa3b0 1px,transparent 1.2px) 0 0/4px 3px}
.orient{width:30px;height:125px;padding-left:4px}
.angle{height:16px;width:24px;background:#fff;border:1px solid #000;border-width:2px 0 0 1px;font-size:11px;line-height:13px;color:#333;margin:2px 0 4px;letter-spacing:-.5px}
.side{width:126px;padding-top:7px;background:linear-gradient(90deg,#e1eaf0 120px,#b1cfe0 121px,#a9cadd);display:flex;flex-direction:column;gap:3px;flex:none}
.overview{width:121px;height:100px;background:#e0e0d0;border:2px solid #6b6b6b;border-width:1px 1px 2px 2px;overflow:hidden}
.overview svg{width:118px;height:98px}
.probes{width:121px;height:492px;border:2px solid #6b6b6b;background:#fff;font:12px "Liberation Sans",sans-serif}
.ptitle{height:23px;background:linear-gradient(#eaf4fa,#acd0e5);border-bottom:2px solid #6b7b85;text-align:center;line-height:22px;letter-spacing:-.55px}
.probes ul{list-style:none;margin:0;padding:0}
.probes li{height:13px;line-height:14px;padding-left:2px;letter-spacing:-.4px}
.probes .sel{background:#3399ff;color:#fff}
.sheet{width:1182px;height:596px;margin-top:7px;background:#b6d2e3}
.sheet svg{width:1178px;height:595px;background:#e0e0d0;border-bottom:1px solid #666;box-shadow:-1px 0 #555,0 -1px #555}
.sheet svg{box-sizing:content-box}
.wire{stroke:#004000;stroke-width:2;fill:none}
.node{fill:#004000}
.part{stroke:#800000;stroke-width:2;fill:none}
.part .filled{fill:#c8c8a8}
.probe{stroke:#0000b0;fill:none}
.big{font:bold 21px "Liberation Sans",sans-serif;fill:#800000}
.ref{font:12.500px "Liberation Sans",sans-serif;fill:#111}
.pv{font:8.500px "Liberation Sans",sans-serif;fill:#222}
.pl{font:8.500px "Liberation Sans",sans-serif;fill:#0000b0}
.status{height:27px;padding-top:2px;display:flex;flex:none;background:#e3ebf1;font:12px "Open Sans",sans-serif}
.status>div{height:25px;background:linear-gradient(#e8f3f9,#c9e2f0 60%,#b2d4e8);display:flex;align-items:center;position:relative;border-right:1px solid #a4c5da}
.s1{width:258px}
.s1 .grip{margin:0 -6px 0 3px}
.s1 svg{width:170px;height:25px}
.s1 svg.warn{width:15px;height:14px;margin-left:1px}
.s1 span{margin-left:5px;letter-spacing:-.55px;white-space:nowrap;font-size:11.500px}
.s2{width:409px;margin-left:8px}
.s2 .grip{margin:0 5px 0 2px}
.s2 span{color:#13461c;font-size:11.500px;letter-spacing:-.45px;white-space:nowrap}
.s3{flex:1;margin-left:6px}
.taskbar{height:40px;display:flex;flex:none;color:#fff;background:linear-gradient(105deg,#303637 0,#32383b 240px,#2a3036 330px,#343b43 370px,#242a31 430px,#060b10 570px,#171d20 660px,#343b3e 740px,#162531 860px,#333b3e 960px,#343536 1366px)}
.taskbar>svg:first-child{width:160px;height:40px}
.apps{width:390px;height:40px;margin-left:310px}
.ps{font:13px "Open Sans",sans-serif}
.tray{display:flex;align-items:center;margin-left:141px;flex:1}
.sun{width:20px;height:20px}
.temp{margin-left:10px;width:83px;font-size:13px;letter-spacing:0;white-space:nowrap;padding-top:1px}
.sys{width:94px;height:40px}
.eng{margin-left:5px;width:35px;letter-spacing:-.5px}
.clock{width:60px;text-align:center;display:flex;flex-direction:column;line-height:18px;letter-spacing:-.1px;font-size:11.500px;white-space:nowrap}
.clock span{margin-left:-1px}
.note{width:50px;height:40px;margin-left:auto}
.cnt{font:bold 12px "Open Sans",sans-serif}
.scope{position:absolute;left:797px;top:251px;width:569px;height:449px;background:#d4d4d4;box-shadow:0 4px 14px rgba(0,0,0,.4);overflow:visible}
.stitle{height:26px;background:#3f3f3f;color:#fff;padding-left:3px;line-height:25px;font-size:11.500px;letter-spacing:0}
.sbody{display:flex;height:423px;background:#c9c9c9;overflow:hidden}
.screen{width:407px;padding:2px 0 0 3px;border-right:1px solid #333;border-bottom:1px solid #222;flex:none}
.screen>svg{width:402px;height:404px}
.scroll{height:16px;background:#f0f0f0;display:flex;align-items:center;padding:0 4px 0 5px;margin-left:-2px;margin-right:1px}
.scroll svg{width:6px;height:10px}
.scroll i{margin-left:auto;margin-right:15px;width:17px;height:14px;background:#cdcdcd}
.panels{display:grid;grid-template-columns:93px 69px;grid-template-rows:27px 184px 28px 184px;column-gap:1px;background:#e8e8e8;padding-left:1px;flex:none}
.ph{background:#a9a9a9;font:bold 13px/27px "Liberation Sans",sans-serif;text-align:center;border-bottom:1px solid #222;border-right:1px solid #222;border-top:1px solid #ddd;padding-right:6px}
.ph.cut{text-align:left;padding:0 0 0 16px;white-space:nowrap;overflow:hidden;font:bold 12px/27px "Open Sans",sans-serif;letter-spacing:-.45px}
.pb{width:93px;height:184px;background:#a9a9a9;border-right:1px solid #222;border-bottom:1px solid #222;box-sizing:content-box;width:92px;height:183px}
.pb.cut{width:67px}
.lab{font:9.800px "Liberation Sans",sans-serif;fill:#222}
.num{font:10px "Liberation Sans",sans-serif;text-anchor:middle}
.abcd{font:bold 9px "Liberation Sans",sans-serif;text-anchor:middle}
.knobtext{font:7.500px "Liberation Sans",sans-serif;text-anchor:middle}
.unit{font:10px "Liberation Sans",sans-serif;text-anchor:middle}
.val{font:10px "Liberation Sans",sans-serif;fill:#000080}
.ticks{stroke:#333;fill:none}
```
FILE: draw.js
```js
const set = (id, d) => document.getElementById(id).setAttribute('d', d);

// sheet grid points
let d = '';
for (let j = -13; j < 48; j++) {
  const y = Math.floor(234.4 + j * 9.91) + 0.5;
  for (let i = -7; i < 111; i++) {
    d += `M${Math.floor(262.4 + i * 9.91)} ${y}h1`;
  }
}
set('dots', d);

// oscilloscope graticule
d = '';
for (let x = 820.5; x < 1200; x += 20) d += `M${x} 280V681`;
for (let y = 280.5; y < 680; y += 20) d += `M800 ${y}H1201`;
set('grid', d);

// sine trace with peaks every 17.55px starting at the given column
function wave(id, peak, mid, amp) {
  let p = '';
  for (let x = 800; x <= 1201; x += 0.5) {
    const y = mid - amp * Math.cos((x - peak) / 17.55 * 2 * Math.PI);
    p += (p ? 'L' : 'M') + x + ' ' + y.toFixed(1);
  }
  set(id, p);
}
wave('waveA', 800, 390.5, 29.5);
wave('waveB', 812.2, 462.5, 17);
```
